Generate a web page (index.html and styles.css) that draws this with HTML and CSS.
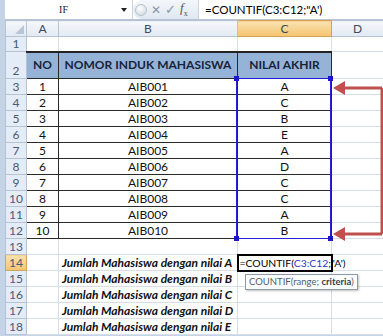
FILE: index.html
```html
<!DOCTYPE html>
<html>
<head>
<meta charset="utf-8">
<link rel="stylesheet" href="styles.css">
</head>
<body>
<div class="app">
  <div class="fbar">
    <div class="namebox"><span class="nb-text">IF</span><span class="nb-arrow"></span></div>
    <div class="fbtns">
      <span class="knob"></span>
      <span class="btn x">✕</span>
      <span class="btn ok">✓</span>
      <span class="btn fx"><i>f</i><sub>x</sub></span>
    </div>
    <div class="finput">=COUNTIF(C3:C12;"A')</div>
  </div>
  <div class="sheet">
    <table class="grid">
      <colgroup><col class="c-rh"><col class="c-a"><col class="c-b"><col class="c-c"><col class="c-d"></colgroup>
      <tr class="r-colhead">
        <th class="corner"><span class="tri"></span></th><th class="ch">A</th><th class="ch">B</th><th class="ch active">C</th><th class="ch">D</th>
      </tr>
      <tr class="r1"><th class="rh">1</th><td></td><td></td><td></td><td></td></tr>
      <tr class="r2"><th class="rh">2</th><td class="hd t">NO</td><td class="hd t">NOMOR INDUK MAHASISWA</td><td class="hd t">NILAI AKHIR</td><td></td></tr>
      <tr><th class="rh">3</th><td class="t">1</td><td class="t">AIB001</td><td class="t">A</td><td></td></tr>
      <tr><th class="rh">4</th><td class="t">2</td><td class="t">AIB002</td><td class="t">C</td><td></td></tr>
      <tr><th class="rh">5</th><td class="t">3</td><td class="t">AIB003</td><td class="t">B</td><td></td></tr>
      <tr><th class="rh">6</th><td class="t">4</td><td class="t">AIB004</td><td class="t">E</td><td></td></tr>
      <tr><th class="rh">7</th><td class="t">5</td><td class="t">AIB005</td><td class="t">A</td><td></td></tr>
      <tr><th class="rh">8</th><td class="t">6</td><td class="t">AIB006</td><td class="t">D</td><td></td></tr>
      <tr><th class="rh">9</th><td class="t">7</td><td class="t">AIB007</td><td class="t">C</td><td></td></tr>
      <tr><th class="rh">10</th><td class="t">8</td><td class="t">AIB008</td><td class="t">C</td><td></td></tr>
      <tr><th class="rh">11</th><td class="t">9</td><td class="t">AIB009</td><td class="t">A</td><td></td></tr>
      <tr><th class="rh">12</th><td class="t">10</td><td class="t">AIB010</td><td class="t">B</td><td></td></tr>
      <tr><th class="rh">13</th><td></td><td></td><td></td><td></td></tr>
      <tr><th class="rh active">14</th><td></td><td class="lbl">Jumlah Mahasiswa dengan nilai A</td><td class="edit"><div class="etext">=COUNTIF(<span class="ref">C3:C12</span>;"A')</div></td><td></td></tr>
      <tr><th class="rh">15</th><td></td><td class="lbl">Jumlah Mahasiswa dengan nilai B</td><td></td><td></td></tr>
      <tr><th class="rh">16</th><td></td><td class="lbl">Jumlah Mahasiswa dengan nilai C</td><td></td><td></td></tr>
      <tr><th class="rh">17</th><td></td><td class="lbl">Jumlah Mahasiswa dengan nilai D</td><td></td><td></td></tr>
      <tr><th class="rh">18</th><td></td><td class="lbl">Jumlah Mahasiswa dengan nilai E</td><td></td><td></td></tr>
    </table>
    <div class="range-sel"><span class="h tl"></span><span class="h tr"></span><span class="h bl"></span><span class="h br"></span></div>
    <div class="tip">COUNTIF(range; <b>criteria</b>)</div>
    <svg class="arrows" width="60" height="160" viewBox="0 0 60 160">
      <path d="M49 10 H9 M49 10 V156 M49 156 H9" fill="none" stroke="#c0504d" stroke-width="3"/>
      <polygon points="0,10 12,3 12,17" fill="#c0504d"/>
      <polygon points="0,156 12,149 12,163" fill="#c0504d"/>
    </svg>
  </div>
</div>
</body>
</html>
```

FILE: styles.css
```css
* { box-sizing: border-box; }
html, body { margin: 0; padding: 0; }
body {
  width: 383px;
  height: 336px;
  overflow: hidden;
  background: #fff;
  font-family: Lato, "Liberation Sans", sans-serif;
}
.app {
  height: 336px;
  padding-left: 5px;
  background: #c4d3e6;
}
.fbar {
  display: flex;
  height: 20px;
  background: #fff;
  border-bottom: 1px solid #b6c4d6;
}
.namebox {
  width: 128px;
  position: relative;
  display: flex;
  align-items: center;
  justify-content: center;
  border-right: 1px solid #c9d4e3;
  font-size: 10px;
  color: #222;
  font-family: "Liberation Serif", serif;
}
.nb-text { margin-left: -10px; }
.nb-arrow {
  position: absolute;
  right: 5px;
  top: 8px;
  border-left: 3px solid transparent;
  border-right: 3px solid transparent;
  border-top: 4px solid #222;
}
.fbtns {
  width: 66px;
  display: flex;
  align-items: center;
  gap: 4px;
  padding-left: 2px;
  background: linear-gradient(#f4f7fb, #dfe7f1);
  border-right: 1px solid #c9d4e3;
  border-radius: 9px 0 0 9px;
}
.knob {
  width: 12px;
  height: 12px;
  border-radius: 50%;
  background: radial-gradient(circle at 40% 35%, #fff, #c8d2de);
  border: 1px solid #b7c2cf;
}
.btn { color: #8a95a3; font-size: 12px; line-height: 1; }
.btn.ok { color: #8a95a3; font-size: 13px; }
.btn.fx { font-family: "Liberation Serif", serif; font-size: 13px; color: #555; }
.btn.fx sub { font-size: 8px; }
.finput {
  flex: 1;
  padding-left: 6px;
  display: flex;
  align-items: center;
  font-size: 11.5px;
  color: #000;
}
.sheet {
  position: relative;
  background: #fff;
}
.grid {
  border-collapse: collapse;
  table-layout: fixed;
  width: 378px;
}
.c-rh { width: 21px; }
.c-a { width: 32px; }
.c-b { width: 179px; }
.c-c { width: 94px; }
.c-d { width: 52px; }
.grid th, .grid td {
  padding: 0;
  height: 16px;
  border: 1px solid #d6dee9;
  font-size: 12px;
  line-height: 14px;
  white-space: nowrap;
  overflow: visible;
}
.r-colhead th {
  height: 16px;
  font-weight: normal;
  color: #3b4a5e;
  font-size: 12px;
  background: linear-gradient(#f5f8fc, #e3e9f2);
  border: 1px solid #b5c3d5;
}
.r-colhead th.active {
  background: linear-gradient(#fbe1b1, #f4c46f);
  border-color: #d4a35a;
}
.corner { position: relative; }
.tri {
  position: absolute;
  right: 2px;
  bottom: 2px;
  border-left: 9px solid transparent;
  border-bottom: 9px solid #b9c6d6;
}
.rh {
  font-weight: normal;
  color: #475a76;
  background: #e4ecf7;
  border: 1px solid #b5c3d5 !important;
  text-align: center;
  vertical-align: bottom;
  font-size: 11.5px;
}
.rh.active { background: linear-gradient(#fbe1b1, #f4c46f); border-color: #d4a35a !important; }
.r1 td, .r1 th { height: 15px; }
.r2 td, .r2 th { height: 27px; }
.t {
  text-align: center;
  color: #111;
  border: 1px solid #2a2a2a !important;
}
.hd {
  background: #95b3d7;
  font-weight: bold;
  color: #17233a;
  font-size: 12px;
  border-top: 2px solid #222 !important;
}
.lbl {
  font-weight: bold;
  font-style: italic;
  color: #111;
  padding-left: 3px !important;
  font-size: 11.5px;
}
.edit {
  border: 2px solid #000 !important;
  font-size: 10.4px !important;
  padding-left: 1px !important;
}
.etext {
  width: 0;
  font-weight: normal;
  color: #000;
}
.ref { color: #2b3bd3; }
.range-sel {
  position: absolute;
  left: 231px;
  top: 58px;
  width: 95px;
  height: 161px;
  border: 1px solid #2320d8;
}
.h {
  position: absolute;
  width: 5px;
  height: 5px;
  background: #1c16c8;
}
.tl { left: -3px; top: -3px; }
.tr { right: -3px; top: -3px; }
.bl { left: -3px; bottom: -3px; }
.br { right: -3px; bottom: -3px; }
.tip {
  position: absolute;
  left: 240px;
  top: 254px;
  width: 113px;
  height: 16px;
  padding-left: 3px;
  background: #fbfcfe;
  border: 1px solid #8e99a8;
  box-shadow: 1px 1px 2px rgba(0,0,0,0.25);
  font-size: 9.5px;
  line-height: 14px;
  color: #555c66;
  white-space: nowrap;
}
.tip b { color: #3a3f47; }
.arrows {
  position: absolute;
  left: 328px;
  top: 58px;
  overflow: visible;
}
```
